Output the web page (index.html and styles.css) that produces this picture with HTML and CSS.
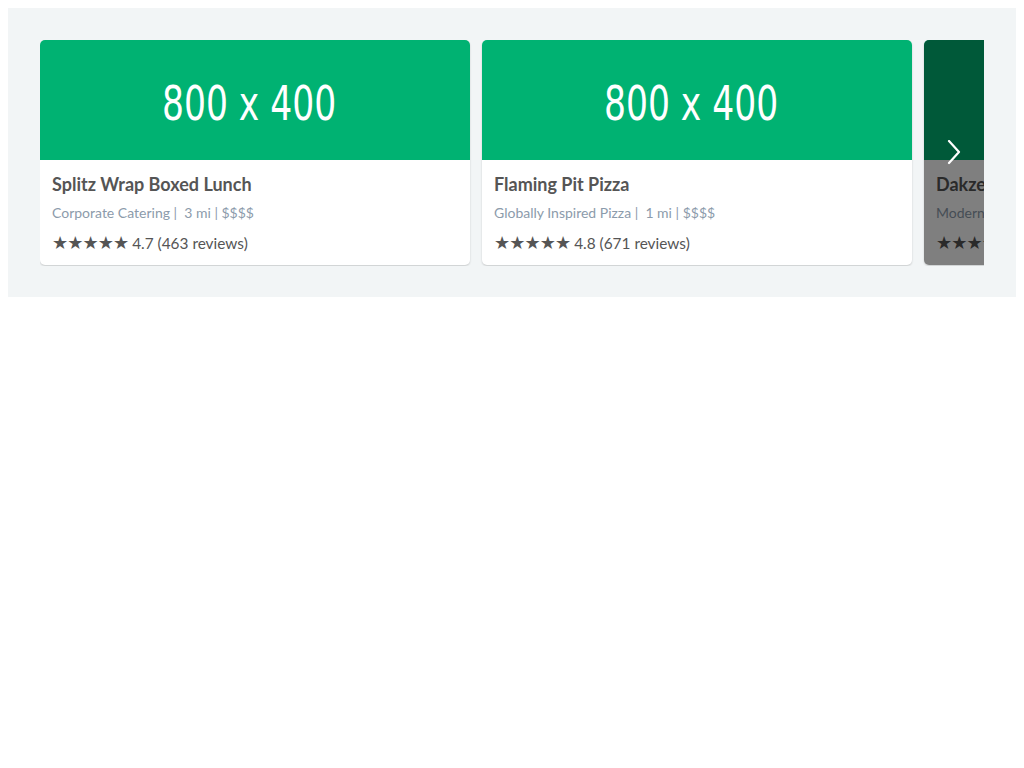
FILE: index.html
```html
<!DOCTYPE html>
<html>
<head>
<meta charset="utf-8">
<link rel="stylesheet" href="styles.css">
</head>
<body>
<div class="carousel">
  <div class="track">
    <div class="card">
      <div class="img"><span>800 x 400</span></div>
      <div class="body">
        <div class="title">Splitz Wrap Boxed Lunch</div>
        <div class="meta">Corporate Catering |&nbsp; 3 mi | $$$$</div>
        <div class="rating"><span class="stars">★★★★★</span> 4.7 (463 reviews)</div>
      </div>
    </div>
    <div class="card">
      <div class="img"><span>800 x 400</span></div>
      <div class="body">
        <div class="title">Flaming Pit Pizza</div>
        <div class="meta">Globally Inspired Pizza |&nbsp; 1 mi | $$$$</div>
        <div class="rating"><span class="stars">★★★★★</span> 4.8 (671 reviews)</div>
      </div>
    </div>
    <div class="card">
      <div class="img"><span>800 x 400</span></div>
      <div class="body">
        <div class="title">Dakzen Thai</div>
        <div class="meta">Modern Thai |&nbsp; 2 mi | $$$$</div>
        <div class="rating"><span class="stars">★★★★★</span> 4.6 (212 reviews)</div>
      </div>
    </div>
    <button class="next" aria-label="Next">
      <svg width="16" height="26" viewBox="0 0 16 26"><polyline points="3,1 13,12 3,23" fill="none" stroke="#fff" stroke-width="2.2" stroke-linecap="round" stroke-linejoin="round"/></svg>
    </button>
  </div>
</div>
</body>
</html>
```
FILE: styles.css
```css
body {
  margin: 8px;
  font-family: Lato, "Open Sans", sans-serif;
  background: #fff;
}
.carousel {
  background: #f2f5f6;
  padding: 32px;
}
.track {
  position: relative;
  display: flex;
  gap: 12px;
  overflow: hidden;
  padding-bottom: 1px;
  margin-bottom: -1px;
}
.card {
  flex: 0 0 430px;
  background: #fff;
  border-radius: 5px;
  overflow: hidden;
  box-shadow: 0 1px 2px rgba(0, 0, 0, 0.18);
}
.img {
  height: 120px;
  background: #00b272;
  display: flex;
  align-items: center;
  justify-content: center;
}
.img span {
  color: #fff;
  font-family: "DejaVu Sans", sans-serif;
  font-weight: 400;
  font-size: 48px;
  line-height: 1;
  margin-top: 5px;
  margin-left: -11px;
  transform: scaleX(0.72);
  white-space: nowrap;
}
.body {
  padding: 12px 12px 11px;
}
.title {
  font-size: 18px;
  font-weight: 700;
  color: #555;
  line-height: 24px;
}
.meta {
  margin-top: 7px;
  font-size: 14px;
  color: #8c9bab;
  line-height: 20px;
}
.rating {
  margin-top: 9px;
  font-size: 15.4px;
  color: #555;
  line-height: 22px;
}
.stars {
  font-size: 18px;
  letter-spacing: -0.9px;
  font-family: "DejaVu Sans", sans-serif;
}
.next {
  position: absolute;
  top: 0;
  right: 0;
  bottom: 1px;
  width: 60px;
  border: 0;
  padding: 0;
  background: rgba(0, 0, 0, 0.5);
  display: flex;
  align-items: center;
  justify-content: center;
  border-radius: 5px 0 0 5px;
}
.next svg {
  display: block;
}
```
